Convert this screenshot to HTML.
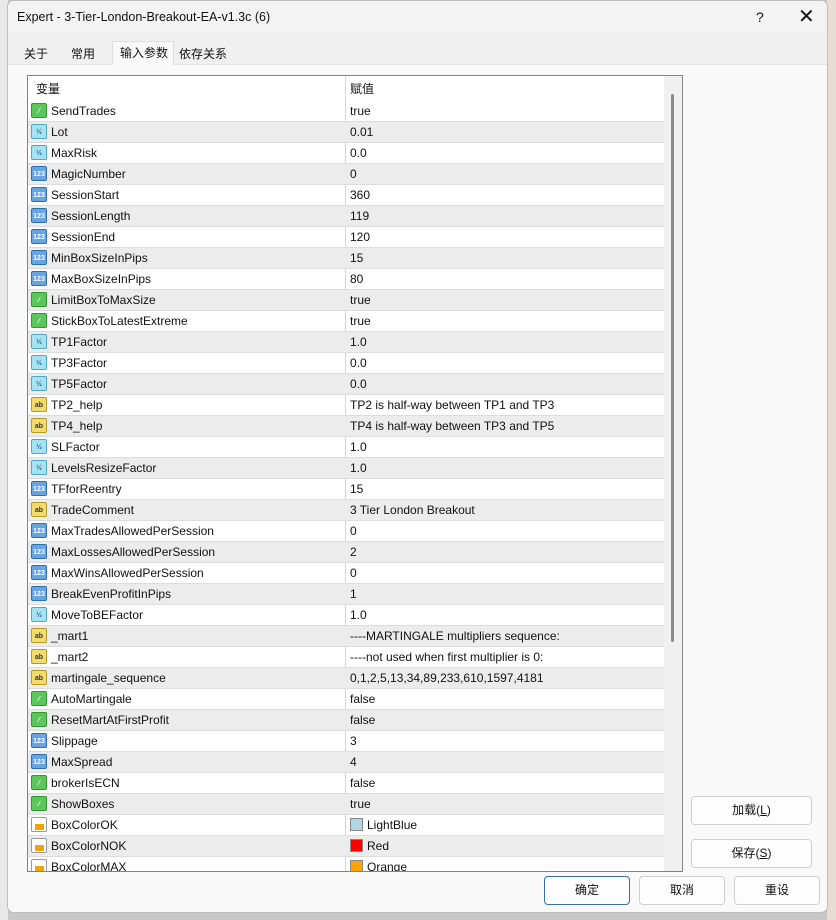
<!DOCTYPE html>
<html><head><meta charset="utf-8"><style>
*{box-sizing:border-box;margin:0;padding:0}
body{width:836px;height:920px;overflow:hidden;background:#c8c8c8;font-family:"Liberation Sans","Noto Sans CJK SC",sans-serif;font-size:12px;color:#111;position:relative}
.lstrip{position:absolute;left:0;top:0;width:8px;height:920px;background:#e8e8e8}
.rstrip{position:absolute;right:0;top:0;width:9px;height:920px;background:#e6ded6}
.dlg{position:absolute;left:7px;top:0;width:821px;height:913px;background:#f9f9f9;border:1px solid #bdbdbd;border-radius:7px;overflow:hidden}
.title{position:absolute;left:0;top:0;width:100%;height:32px;background:#f3f3f3;font-size:12.5px;line-height:32px;padding-left:9px}
.tabs{position:absolute;left:0;top:32px;width:100%;height:32px;background:#f0f0f0;border-bottom:1px solid #e3e3e3}
.tab{position:absolute;top:10px;height:22px;line-height:22px;font-size:12px}
.grid{position:absolute;left:19px;top:74px;width:656px;height:797px;border:1px solid #828282;background:#fff;overflow:hidden}
.hdr{position:absolute;left:0;top:0;width:636px;height:25px;line-height:26px}
.row{position:absolute;left:0;width:636px;height:21px;line-height:20px;border-bottom:1px solid #dcdcdc}
.row.g{background:#ececec}
.n{position:absolute;left:23px}
.v{position:absolute;left:322px}
.div{position:absolute;left:317px;top:0;width:1px;height:800px;background:#d6d6d6}
.ic{position:absolute;left:3px;top:2px;width:16px;height:15px;border-radius:2px;font-size:7px;line-height:15px;text-align:center;font-weight:bold}
.b{background:#5cc65c;border:1px solid #2f9a2f;color:#fff}
.f{background:#a8e2f2;border:1px solid #4aa8c8;color:#1a6d94}
.i{background:#6aa4de;border:1px solid #2e6fb4;color:#fff}
.s{background:#f2dc70;border:1px solid #b89b20;color:#333}
.c{background:#fff;border:1px solid #999}
.c:after{content:"";position:absolute;left:3px;top:6px;width:9px;height:6px;background:#f2a400}
.sw{display:inline-block;width:13px;height:13px;vertical-align:-2px;margin-right:4px;border:1px solid #888}
.sb{position:absolute;left:636px;top:0;width:18px;height:797px;background:#f0f0f0}
.th{position:absolute;left:7px;top:18px;width:3px;height:548px;background:#8a8a8a;border-radius:2px}
.btn{position:absolute;height:29px;border:1px solid #cfcfcf;border-radius:4px;background:#fdfdfd;text-align:center;line-height:27px;font-size:12px}
</style></head><body>
<div class="lstrip"></div><div class="rstrip"></div>
<div class="dlg">
<div class="title">Expert - 3-Tier-London-Breakout-EA-v1.3c (6)<span style="position:absolute;left:748px;font-size:14px">?</span><span style="position:absolute;left:790px;font-size:20px;font-weight:300">✕</span></div>
<div class="tabs">
<div class="tab" style="left:16px">关于</div>
<div class="tab" style="left:63px">常用</div>
<div class="tab" style="left:104px;top:8px;height:24px;width:62px;background:#f9f9f9;border:1px solid #ddd;border-bottom:none;padding-left:7px">输入参数</div>
<div class="tab" style="left:171px">依存关系</div>
</div>
<div class="grid">
<div class="hdr"><span class="n" style="left:8px">变量</span><span class="v">赋值</span></div>
<div class="div"></div>
<div id="rows"></div>
<div class="sb"><div class="th"></div></div>
</div>
<div class="btn" style="left:683px;top:795px;width:121px">加载(<u>L</u>)</div>
<div class="btn" style="left:683px;top:838px;width:121px">保存(<u>S</u>)</div>
<div class="btn" style="left:536px;top:875px;width:86px;border:1px solid #3a6ea5">确定</div>
<div class="btn" style="left:631px;top:875px;width:86px">取消</div>
<div class="btn" style="left:726px;top:875px;width:86px">重设</div>
</div>
<div style="position:absolute;left:20px;top:0;width:0"></div>
<script>
var d=[["b","SendTrades","true"],["f","Lot","0.01"],["f","MaxRisk","0.0"],["i","MagicNumber","0"],["i","SessionStart","360"],["i","SessionLength","119"],["i","SessionEnd","120"],["i","MinBoxSizeInPips","15"],["i","MaxBoxSizeInPips","80"],["b","LimitBoxToMaxSize","true"],["b","StickBoxToLatestExtreme","true"],["f","TP1Factor","1.0"],["f","TP3Factor","0.0"],["f","TP5Factor","0.0"],["s","TP2_help","TP2 is half-way between TP1 and TP3"],["s","TP4_help","TP4 is half-way between TP3 and TP5"],["f","SLFactor","1.0"],["f","LevelsResizeFactor","1.0"],["i","TFforReentry","15"],["s","TradeComment","3 Tier London Breakout"],["i","MaxTradesAllowedPerSession","0"],["i","MaxLossesAllowedPerSession","2"],["i","MaxWinsAllowedPerSession","0"],["i","BreakEvenProfitInPips","1"],["f","MoveToBEFactor","1.0"],["s","_mart1","----MARTINGALE multipliers sequence:"],["s","_mart2","----not used when first multiplier is 0:"],["s","martingale_sequence","0,1,2,5,13,34,89,233,610,1597,4181"],["b","AutoMartingale","false"],["b","ResetMartAtFirstProfit","false"],["i","Slippage","3"],["i","MaxSpread","4"],["b","brokerIsECN","false"],["b","ShowBoxes","true"],["c","BoxColorOK","LightBlue","#add8e6"],["c","BoxColorNOK","Red","#ff0000"],["c","BoxColorMAX","Orange","#ffa500"]];
var t={b:"⁄",f:"½",i:"123",s:"ab",c:""},h="";
d.forEach(function(r,k){var top=25+21*k;var v=r[3]?'<span class="sw" style="background:'+r[3]+'"></span>'+r[2]:r[2];
h+='<div class="row'+(k%2?' g':'')+'" style="top:'+top+'px"><span class="ic '+r[0]+'">'+t[r[0]]+'</span><span class="n">'+r[1]+'</span><span class="v">'+v+'</span></div>';});
document.getElementById("rows").innerHTML=h;
</script>
</body></html>
